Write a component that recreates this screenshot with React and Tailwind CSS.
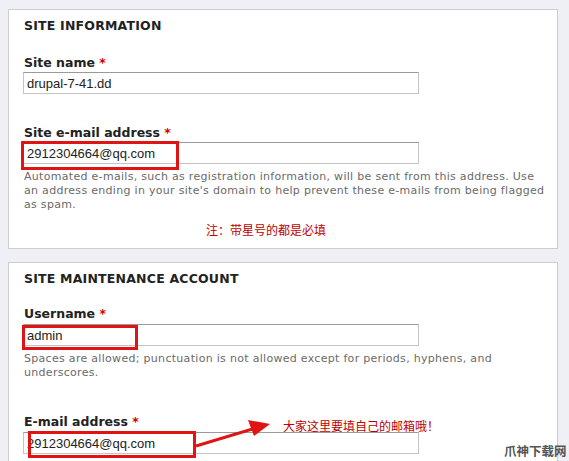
import React from "react";

const sans = "font-['DejaVu_Sans','Verdana',sans-serif]";
const cjk = "font-['Noto_Sans_CJK_SC','Noto_Sans',sans-serif]";

function Field({ value, width = "w-[396px]", children }) {
  return (
    <div className="relative -ml-px">
      <input
        readOnly
        value={value}
        className={`${width} h-[22px] block border border-[#c4c4c4] border-t-[#9a9a9a] bg-white pl-[3px] text-[13px] text-[#222] font-['Liberation_Sans',Arial,sans-serif] outline-none`}
      />
      {children}
    </div>
  );
}

function Label({ text, className = "" }) {
  return (
    <div className={`text-[12.5px] leading-[16px] font-bold text-[#222] ${className}`}>
      {text} <span className="text-[#d00000]">*</span>
    </div>
  );
}

export default function App() {
  return (
    <div className={`relative w-[569px] h-[461px] overflow-hidden bg-[#eef0f5] pt-[9px] pl-[8px] ${sans}`}>
      {/* Panel 1 */}
      <div className="w-[550px] h-[240px] border border-[#cdcdcd] bg-white pl-[15px] pt-[8px]">
        <div className="text-[12.5px] leading-[16px] font-bold text-[#222] uppercase tracking-[0.2px]">Site information</div>
        <Label text="Site name" className="mt-[21px]" />
        <div className="mt-px">
          <Field value="drupal-7-41.dd" />
        </div>
        <Label text="Site e-mail address" className="mt-[31px]" />
        <div className="mt-px">
          <Field value="2912304664@qq.com">
            <div className="absolute left-[-2px] top-[-1px] w-[158px] h-[29px] border-[3px] border-[#e01414]" />
          </Field>
        </div>
        <p className="mt-[6px] w-[527px] text-[11px] leading-[14px] tracking-[0.3px] text-[#6a6a6a]">
          Automated e-mails, such as registration information, will be sent from this address. Use an address ending in your site's domain to help prevent these e-mails from being flagged as spam.
        </p>
        <div className={`mt-[10px] ml-[182px] text-[12px] leading-[16px] text-[#c00000] ${cjk}`}>注：带星号的都是必填</div>
      </div>

      {/* Panel 2 */}
      <div className="mt-[13px] w-[550px] h-[300px] border border-[#cdcdcd] bg-white pl-[15px] pt-[8px]">
        <div className="text-[12.5px] leading-[16px] font-bold text-[#222] uppercase tracking-[0.2px]">Site maintenance account</div>
        <Label text="Username" className="mt-[19px]" />
        <div className="mt-[2px]">
          <Field value="admin">
            <div className="absolute left-[-1px] top-[1px] w-[116px] h-[25px] border-[3px] border-[#e01414]" />
          </Field>
        </div>
        <p className="mt-[6px] w-[527px] text-[11px] leading-[14px] tracking-[0.3px] text-[#6a6a6a]">
          Spaces are allowed; punctuation is not allowed except for periods, hyphens, and underscores.
        </p>
        <Label text="E-mail address" className="mt-[34px]" />
        <div className="mt-[2px]">
          <Field value="2912304664@qq.com">
            <div className="absolute left-[5px] top-[-1px] w-[168px] h-[27px] border-[3px] border-[#e01414]" />
          </Field>
        </div>
      </div>

      {/* Arrow annotation */}
      <svg className="absolute left-[190px] top-[414px]" width="90" height="40" viewBox="0 0 90 40">
        <line x1="6" y1="32" x2="66" y2="14" stroke="#e01414" strokeWidth="3" />
        <polygon points="80,10 58,6 64,22" fill="#e01414" />
      </svg>
      <div className={`absolute left-[283px] top-[418px] text-[12px] leading-[16px] text-[#c00000] ${cjk}`}>
        大家这里要填自己的邮箱哦！
      </div>

      {/* Watermark */}
      <div className={`absolute left-[504px] top-[443px] text-[12.5px] leading-[16px] font-bold text-[#555] ${cjk}`}>
        爪神下载网
      </div>
    </div>
  );
}
